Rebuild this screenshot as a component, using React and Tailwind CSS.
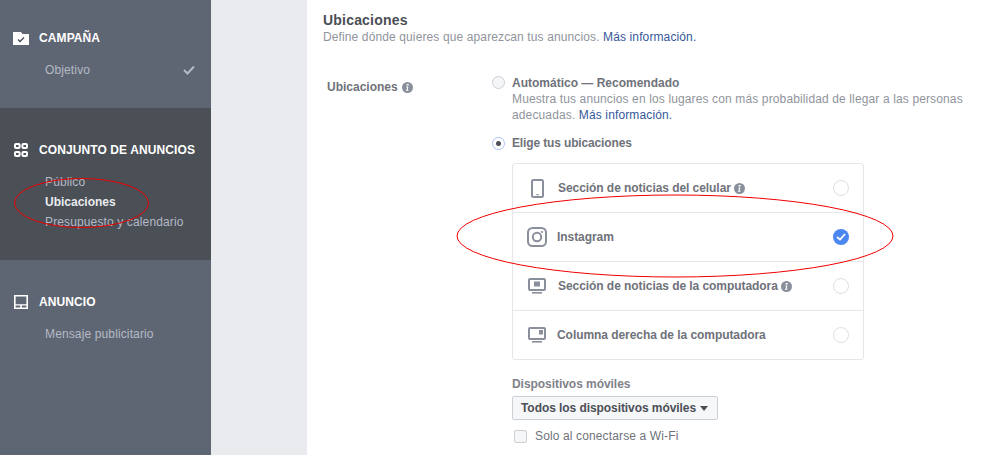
const Info = ({ className = "" }) => (
  <svg width="11" height="11" viewBox="0 0 11 11" className={"shrink-0 " + className}>
    <circle cx="5.5" cy="5.5" r="5.5" fill="#8a8f9c" />
    <rect x="5" y="2" width="2" height="1.6" fill="#fff" transform="skewX(-8)" />
    <path d="M4.4 4.6h2l-.7 3.2h.7v.9H3.9l.1-.9h.6l.5-2.3h-.8z" fill="#fff" />
  </svg>
);

const Radio = ({ checked }) =>
  checked ? (
    <span className="flex size-4 items-center justify-center rounded-full bg-[#4b87f0]">
      <svg width="10" height="8" viewBox="0 0 10 8"><path d="M1 4l3 2.6L9 1" fill="none" stroke="#fff" strokeWidth="1.8" /></svg>
    </span>
  ) : (
    <span className="block size-4 rounded-full border border-[#dddfe2] bg-white" />
  );

const PhoneIcon = () => (
  <svg width="13" height="19" viewBox="0 0 13 19"><rect x="1" y="1" width="11" height="17" rx="1.5" fill="none" stroke="#8a8f9c" strokeWidth="2" /><rect x="5.5" y="15" width="2" height="1.4" fill="#8a8f9c" /></svg>
);
const IgIcon = () => (
  <svg width="20" height="20" viewBox="0 0 20 20" fill="none" stroke="#8a8f9c"><rect x="1" y="1" width="18" height="18" rx="4.5" strokeWidth="2" /><circle cx="10" cy="10" r="4.2" strokeWidth="2" /><circle cx="15" cy="5" r="1.1" fill="#8a8f9c" stroke="none" /></svg>
);
const DesktopFeed = () => (
  <svg width="18" height="16" viewBox="0 0 18 16"><rect x="1" y="1" width="16" height="11" rx="1" fill="none" stroke="#8a8f9c" strokeWidth="2" /><rect x="6" y="3.5" width="6" height="5" fill="#8a8f9c" /><rect x="4" y="14" width="10" height="1.6" fill="#8a8f9c" /></svg>
);
const DesktopRight = () => (
  <svg width="18" height="16" viewBox="0 0 18 16"><rect x="1" y="1" width="16" height="11" rx="1" fill="none" stroke="#8a8f9c" strokeWidth="2" /><rect x="11" y="3" width="4" height="4.5" fill="#8a8f9c" /><rect x="4" y="14" width="10" height="1.6" fill="#8a8f9c" /></svg>
);

const CampaignIcon = () => (
  <svg width="16" height="13" viewBox="0 0 16 13"><path d="M0 0h8l1.5 2H16v11H0z" fill="#fff" /><path d="M5 7.5l2 2 4-4" fill="none" stroke="#4b4f56" strokeWidth="1.4" /></svg>
);
const AdSetIcon = () => (
  <svg width="14" height="14" viewBox="0 0 14 14" fill="none" stroke="#fff" strokeWidth="2"><rect x="1" y="1" width="4.6" height="4" rx="1" /><rect x="8.4" y="1" width="4.6" height="4" rx="1" /><rect x="1" y="9" width="4.6" height="4" rx="1" /><rect x="8.4" y="9" width="4.6" height="4" rx="1" /></svg>
);
const AdIcon = () => (
  <svg width="14" height="14" viewBox="0 0 14 14"><path fillRule="evenodd" d="M0 0h14v14H0zM1.6 1.6v7.6h10.8V1.6zM1.6 10.6v1.8h4.6v-1.8zM7.8 10.6v1.8h4.6v-1.8z" fill="#fff" /></svg>
);

const Header = ({ icon, pad, children }) => (
  <div className="flex h-[18px] items-center">
    <span className={"flex w-[39px] " + pad}>{icon}</span>
    <span className="text-[12px] font-bold tracking-[0.1px] text-white">{children}</span>
  </div>
);

const Placement = ({ icon, label, info, checked, gap, last }) => (
  <div className={"flex items-center pl-[14px] pr-[14px] " + (last ? "h-[48px]" : "h-[49px] border-b border-[#e5e6e9]")}>
    <span className="flex w-[20px] justify-center">{icon}</span>
    <span className={"flex flex-1 items-center gap-[3px] text-[12px] font-bold tracking-[-0.06px] text-[#6f727a] " + gap}>
      {label}
      {info && <Info />}
    </span>
    <Radio checked={checked} />
  </div>
);

export default function App() {
  return (
    <div className="relative flex h-[455px] w-[991px] overflow-hidden bg-white font-['Liberation_Sans',Arial,sans-serif]">
      <aside className="flex w-[211px] shrink-0 flex-col bg-[#5f6673]">
        <section className="h-[108px] pt-[29px]">
          <Header icon={<CampaignIcon />} pad="pl-[13px]">CAMPAÑA</Header>
          <div className="mt-[15px] flex h-[16px] items-center justify-between pl-[45px] pr-[16px] text-[12px] tracking-[0.13px] text-[#b4bac6]">
            Objetivo
            <svg width="12" height="10" viewBox="0 0 12 10"><path d="M1 5l3.5 3.5L11 1.5" fill="none" stroke="#b4bac6" strokeWidth="2" /></svg>
          </div>
        </section>
        <section className="h-[152px] bg-[#4b4f56] pt-[33px]">
          <Header icon={<AdSetIcon />} pad="pl-[14px]">CONJUNTO DE ANUNCIOS</Header>
          <div className="mt-[15px] flex flex-col gap-[4px] pl-[45px] text-[12px] leading-[16px] tracking-[0.13px] text-[#b4bac6]">
            <span>Público</span>
            <span className="font-bold tracking-normal text-[#e9ebee]">Ubicaciones</span>
            <span>Presupuesto y calendario</span>
          </div>
        </section>
        <section className="flex-1 pt-[33px]">
          <Header icon={<AdIcon />} pad="pl-[14px]">ANUNCIO</Header>
          <div className="mt-[15px] pl-[45px] text-[12px] leading-[16px] tracking-[0.13px] text-[#b4bac6]">Mensaje publicitario</div>
        </section>
      </aside>
      <div className="w-[96px] shrink-0 bg-[#e9ebee]" />
      <main className="flex-1 pl-[16px] pt-[12px]">
        <h2 className="text-[14px] font-bold leading-[17px] tracking-[0.2px] text-[#4b4f56]">Ubicaciones</h2>
        <p className="text-[12px] leading-[16px] tracking-[0.12px] text-[#90949c]">
          Define dónde quieres que aparezcan tus anuncios. <span className="text-[#365899]">Más información.</span>
        </p>
        <div className="mt-[34px] flex">
          <div className="flex w-[169px] shrink-0 items-center gap-[4px] self-start pl-[4px] text-[12px] font-bold leading-[16px] text-[#6f727a]">
            Ubicaciones <Info />
          </div>
          <div className="w-[475px] -mt-[4px]">
            <div className="flex">
              <span className="mt-[1px] size-[13px] shrink-0 rounded-full border border-[#ccd0d5] bg-[#f5f6f7]" />
              <div className="pl-[7px] text-[12px] leading-[16px] tracking-[0.13px] text-[#90949c]">
                <div className="font-bold tracking-normal text-[#6f727a]">Automático — Recomendado</div>
                <div className="w-[462px]">
                  Muestra tus anuncios en los lugares con más probabilidad de llegar a las personas adecuadas. <span className="text-[#365899]">Más información.</span>
                </div>
              </div>
            </div>
            <div className="mt-[12px] flex items-center">
              <span className="flex size-[13px] shrink-0 items-center justify-center rounded-full border border-[#a9c4f5] bg-white">
                <span className="size-[5px] rounded-full bg-[#4b4f56]" />
              </span>
              <span className="pl-[7px] text-[12px] font-bold leading-[16px] tracking-[-0.14px] text-[#6f727a]">Elige tus ubicaciones</span>
            </div>
            <div className="mt-[12px] ml-[20px] w-[352px] rounded-[3px] border border-[#e5e6e9]">
              <Placement icon={<PhoneIcon />} label="Sección de noticias del celular" info gap="pl-[11px]" />
              <Placement icon={<IgIcon />} label="Instagram" checked gap="pl-[10px]" />
              <Placement icon={<DesktopFeed />} label="Sección de noticias de la computadora" info gap="pl-[11px]" />
              <Placement icon={<DesktopRight />} label="Columna derecha de la computadora" gap="pl-[10px]" last />
            </div>
            <div className="ml-[20px] mt-[16px] text-[12px] font-bold leading-[16px] tracking-[-0.05px] text-[#7f8289]">Dispositivos móviles</div>
            <div className="ml-[20px] mt-[4px] flex h-[24px] w-[206px] items-center justify-between rounded-[2px] border border-[#ccd0d5] bg-[#f6f7f9] pl-[8px] pr-[9px] text-[12px] font-bold tracking-[-0.07px] text-[#4b4f56]">
              Todos los dispositivos móviles
              <span className="h-0 w-0 border-x-[4px] border-t-[5px] border-x-transparent border-t-[#4b4f56]" />
            </div>
            <div className="ml-[22px] mt-[8px] flex items-center gap-[8px] text-[12px] leading-[16px] tracking-[0.13px] text-[#6f727a]">
              <span className="size-[13px] rounded-[2px] border border-[#ccd0d5] bg-[#f5f6f7]" />
              Solo al conectarse a Wi-Fi
            </div>
          </div>
        </div>
      </main>
      <svg className="pointer-events-none absolute left-0 top-0" width="991" height="455" fill="none" stroke="#f00000" strokeWidth="1">
        <ellipse cx="81.5" cy="203" rx="67" ry="24.5" />
        <ellipse cx="675" cy="236" rx="218" ry="41" />
      </svg>
    </div>
  );
}
